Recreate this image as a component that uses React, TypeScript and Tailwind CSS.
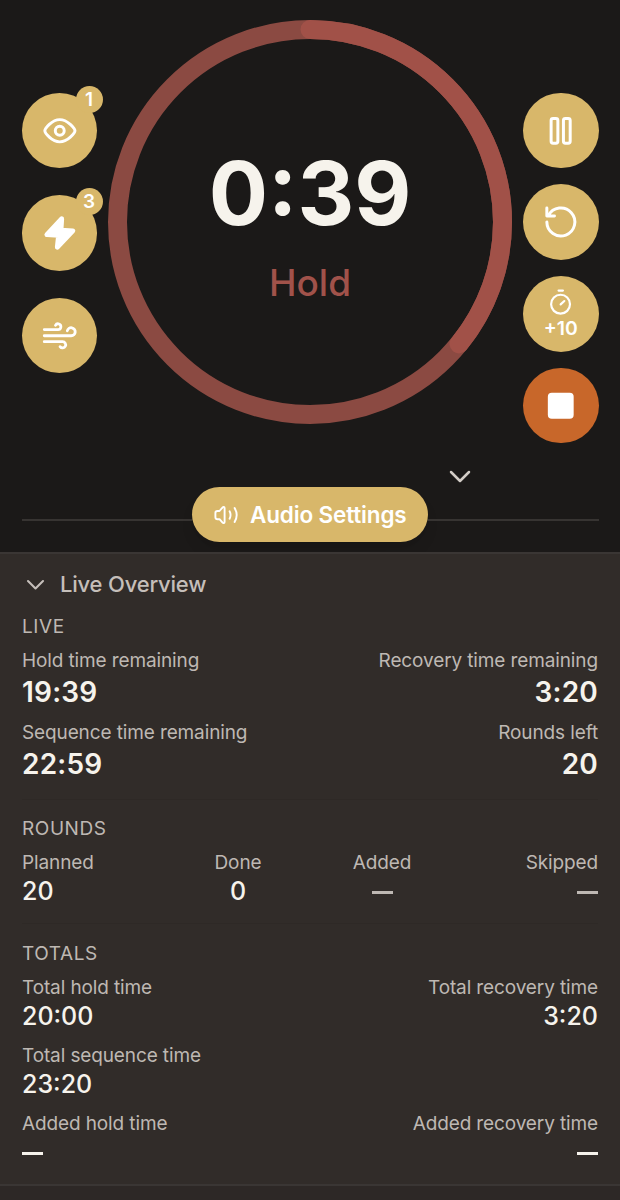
import type { ReactNode } from 'react'

const R = 192.5
const C = 2 * Math.PI * R
const progress = 0.359

function RoundButton({ children, badge, stop }: { children: ReactNode; badge?: string; stop?: boolean }) {
  return (
    <button className={`relative block h-[75.5px] w-[75.5px] shrink-0 rounded-full text-white ${stop ? 'bg-[#c8672a]' : 'bg-[#d8b76a]'}`}>
      <svg viewBox="0 0 76 76" className="h-full w-full" fill="none" stroke="currentColor" strokeWidth="3" strokeLinecap="round" strokeLinejoin="round">
        {children}
      </svg>
      {badge && (
        <span className="absolute -top-[7px] left-[54px] flex h-[27px] w-[27px] items-center justify-center rounded-full bg-[#d8b76a] text-[19px] leading-none font-semibold">
          {badge}
        </span>
      )}
    </button>
  )
}

function Ring() {
  return (
    <div className="relative h-[404px] w-[404px] shrink-0">
      <svg viewBox="0 0 404 404" className="h-full w-full -rotate-90" fill="none" strokeWidth="19">
        <circle cx="202" cy="202" r={R} stroke="#8b4a42" />
        <circle cx="202" cy="202" r={R} stroke="#a15148" strokeLinecap="round" strokeDasharray={`${C * progress} ${C}`} />
      </svg>
      <div className="absolute inset-0 flex flex-col items-center pt-[128px]">
        <div className="text-[88px] leading-[90px] font-bold text-[#f6f3ec]">0:39</div>
        <div className="mt-[21px] text-[37px] leading-[48px] font-medium text-[#a1524a]">Hold</div>
      </div>
    </div>
  )
}

function Title({ children }: { children: ReactNode }) {
  return <h2 className="mb-[10px] text-[19px] leading-6 tracking-[0.03em] text-[#beb8b3]">{children}</h2>
}

function Stat({ label, value, big, dim, align = 'items-start' }: { label: string; value: string; big?: boolean; dim?: boolean; align?: string }) {
  return (
    <div className={`flex flex-col ${align}`}>
      <div className="text-[19px] leading-6 tracking-[-0.12px] whitespace-nowrap text-[#beb8b3]">{label}</div>
      <div className={big ? '-mt-px mb-px text-[28px] leading-10 font-semibold tracking-[0.2px]' : '-mt-px mb-px text-[25px] leading-[34px] font-medium'}>
        {value === '—'
          ? <span className={`mt-[17px] block h-[3px] w-[21px] ${dim ? 'bg-[#beb8b3]' : 'bg-[#f6f3ec]'}`} />
          : value}
      </div>
    </div>
  )
}

export default function App() {
  return (
    <main className="flex h-[1200px] w-[620px] flex-col overflow-hidden bg-[#1b1918] font-['Inter',sans-serif] text-[#f6f3ec]">
      <section className="h-[552px] shrink-0 px-[21.5px] pt-5">
        <div className="flex justify-between">
          <div className="flex flex-col gap-[27px] pt-[72.5px]">
            <RoundButton badge="1">
              <path d="M23 38C23 35.8 30 26.8 38 26.8S53.3 35.8 53.3 38 46 49.2 38 49.2 23 40.2 23 38Z" />
              <circle cx="38" cy="38" r="4.5" />
            </RoundButton>
            <RoundButton badge="3">
              <path d="M40 23.9 25 40 36.8 40.6 35.5 52.7 51.2 36 39.3 35.3Z" fill="currentColor" strokeWidth="4.8" />
            </RoundButton>
            <RoundButton>
              <path d="M22.4 31.8H36.2A2.9 2.9 0 1 0 33.7 27.5M22.4 38H49.5A4.05 4.05 0 1 0 45.6 33M22.4 44H40.8A3.15 3.15 0 1 1 38.3 49" strokeWidth="2.8" />
            </RoundButton>
          </div>
          <Ring />
          <div className="flex flex-col gap-[16.3px] pt-[72.5px]">
            <RoundButton>
              <rect x="28.3" y="25.6" width="6.8" height="25" rx="2" />
              <rect x="40.7" y="25.6" width="6.8" height="25" rx="2" />
            </RoundButton>
            <RoundButton>
              <path d="M24 24.2V32.2H31.7M24 38.3A14.1 14.1 0 1 0 25.6 31.7" />
            </RoundButton>
            <RoundButton>
              <g strokeWidth="2.2">
                <circle cx="37.8" cy="28.4" r="9.5" />
                <path d="M35.8 14.7H40.2M37.9 28.6 41.6 25.2" />
              </g>
              <text x="38" y="59.4" textAnchor="middle" fill="currentColor" stroke="none" className="text-[19.5px] font-semibold">+10</text>
            </RoundButton>
            <RoundButton stop>
              <rect x="25" y="25" width="26" height="26" rx="4" fill="currentColor" stroke="none" />
            </RoundButton>
          </div>
        </div>
        <div className="mt-[26px] flex h-[18px] items-end justify-end pr-[128px] pb-[3px]">
          <svg viewBox="0 0 22 14" className="h-[14px] w-[22px]" fill="none" stroke="#d3cdc7" strokeWidth="2.5" strokeLinecap="round" strokeLinejoin="round">
            <path d="M2 2 11 11 20 2" />
          </svg>
        </div>
        <div className="flex items-center">
          <div className="mt-[11px] h-[2px] flex-1 bg-[#373432]" />
          <button className="flex h-[55px] w-[236px] items-center gap-3 rounded-full bg-[#d8b76a] pl-[22px] text-[22.5px] font-semibold tracking-[-0.15px] whitespace-nowrap text-white shadow-lg">
            <svg viewBox="0 0 24 24" className="h-6 w-6 shrink-0" fill="none" stroke="currentColor" strokeWidth="1.9" strokeLinecap="round" strokeLinejoin="round">
              <path d="M3.5 8H5.5L8.7 4.3C9.3 3.6 10.6 3.8 10.6 4.9V19C10.6 20.2 9.3 20.5 8.6 19.7L5.5 16.2H3.5Q1.4 16.2 1.4 14.3V9.9Q1.4 8 3.5 8ZM15.6 8.3Q17.5 12 15.6 15.7M20.6 5Q24.8 12 20.6 19" />
            </svg>
            Audio Settings
          </button>
          <div className="mt-[11px] h-[2px] flex-1 bg-[#373432]" />
        </div>
      </section>

      <section className="h-[632px] shrink-0 border-t-2 border-[#3a3634] bg-[#312c29] px-[22px]">
        <div className="flex h-[61px] items-center gap-[15px] pl-[4px] text-[22px] font-medium tracking-[-0.2px] text-[#c5bfba]">
          <svg viewBox="0 0 19 12" className="h-3 w-[19px]" fill="none" stroke="currentColor" strokeWidth="2.1" strokeLinecap="round" strokeLinejoin="round">
            <path d="M2 2 9.5 9.5 17 2" />
          </svg>
          Live Overview
        </div>
        <Title>LIVE</Title>
        <div className="grid grid-cols-2 gap-y-2">
          <Stat big label="Hold time remaining" value="19:39" />
          <Stat big label="Recovery time remaining" value="3:20" align="items-end" />
          <Stat big label="Sequence time remaining" value="22:59" />
          <Stat big label="Rounds left" value="20" align="items-end" />
        </div>
        <hr className="mt-[14px] mb-[17px] border-[#2e2926]" />
        <Title>ROUNDS</Title>
        <div className="grid grid-cols-4">
          <Stat label="Planned" value="20" />
          <Stat label="Done" value="0" align="items-center" />
          <Stat label="Added" value="—" dim align="items-center" />
          <Stat label="Skipped" value="—" dim align="items-end" />
        </div>
        <hr className="mt-[14px] mb-[18px] border-[#2e2926]" />
        <Title>TOTALS</Title>
        <div className="grid grid-cols-2 gap-y-[10px]">
          <Stat label="Total hold time" value="20:00" />
          <Stat label="Total recovery time" value="3:20" align="items-end" />
          <Stat label="Total sequence time" value="23:20" />
          <div />
          <Stat label="Added hold time" value="—" />
          <Stat label="Added recovery time" value="—" align="items-end" />
        </div>
      </section>
      <div className="flex-1 border-t-2 border-[#3a3634] bg-[#2d2826]" />
    </main>
  )
}
